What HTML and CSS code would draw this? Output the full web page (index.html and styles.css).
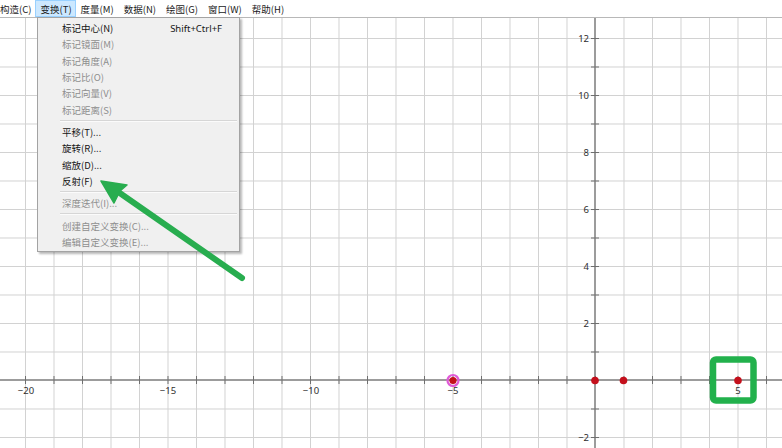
FILE: index.html
```html
<!DOCTYPE html>
<html lang="zh-CN">
<head>
<meta charset="utf-8">
<title>变换</title>
<link rel="stylesheet" href="styles.css">
</head>
<body>
<div class="app">
  <svg class="canvas" width="782" height="448" viewBox="0 0 782 448">
    <defs>
      <pattern id="grid" x="25" y="9.5" width="28.5" height="28.5" patternUnits="userSpaceOnUse">
        <rect x="0" y="0" width="1" height="28.5" fill="#d2d2d2"/>
        <rect x="0" y="0" width="28.5" height="1" fill="#d2d2d2"/>
      </pattern>
      <pattern id="xt" x="25" y="0" width="28.5" height="448" patternUnits="userSpaceOnUse">
        <rect x="0" y="0" width="1" height="448" fill="#6e6e6e"/>
      </pattern>
      <pattern id="yt" x="0" y="9.5" width="782" height="28.5" patternUnits="userSpaceOnUse">
        <rect x="0" y="0" width="782" height="1" fill="#6e6e6e"/>
      </pattern>
    </defs>
    <rect x="0" y="0" width="782" height="448" fill="#ffffff"/>
    <rect x="0" y="0" width="782" height="448" fill="url(#grid)"/>
    <rect x="0" y="379" width="782" height="2" fill="#9c9c9c"/>
    <rect x="594" y="0" width="2" height="448" fill="#9c9c9c"/>
    <rect x="0" y="376" width="782" height="8" fill="url(#xt)"/>
    <rect x="591" y="0" width="8" height="448" fill="url(#yt)"/>
    <g class="lbl">
      <text x="26" y="394" text-anchor="middle">−20</text>
      <text x="168" y="394" text-anchor="middle">−15</text>
      <text x="311" y="394" text-anchor="middle">−10</text>
      <text x="453" y="394" text-anchor="middle">−5</text>
      <text x="738" y="394" text-anchor="middle">5</text>
      <text x="589" y="41.5" text-anchor="end">12</text>
      <text x="589" y="98.5" text-anchor="end">10</text>
      <text x="589" y="155.5" text-anchor="end">8</text>
      <text x="589" y="212.5" text-anchor="end">6</text>
      <text x="589" y="269.5" text-anchor="end">4</text>
      <text x="589" y="326.5" text-anchor="end">2</text>
      <text x="589" y="440.5" text-anchor="end">−2</text>
    </g>
    <circle cx="453" cy="380.5" r="5.5" fill="none" stroke="#e05ad8" stroke-width="2.2"/>
    <circle cx="453" cy="380.5" r="3.6" fill="#c4101c"/>
    <circle cx="595" cy="380.5" r="3.8" fill="#c4101c"/>
    <circle cx="623.5" cy="380.5" r="3.8" fill="#c4101c"/>
    <circle cx="738" cy="380.5" r="3.8" fill="#c4101c"/>
  </svg>

  <nav class="menubar">
    <span class="mi first">构造(C)</span>
    <span class="mi active">变换(T)</span>
    <span class="mi">度量(M)</span>
    <span class="mi">数据(N)</span>
    <span class="mi">绘图(G)</span>
    <span class="mi">窗口(W)</span>
    <span class="mi">帮助(H)</span>
  </nav>

  <div class="dropdown">
    <div class="row"><span>标记中心(N)</span><span class="key">Shift+Ctrl+F</span></div>
    <div class="row off">标记镜面(M)</div>
    <div class="row off">标记角度(A)</div>
    <div class="row off">标记比(O)</div>
    <div class="row off">标记向量(V)</div>
    <div class="row off">标记距离(S)</div>
    <div class="sep"></div>
    <div class="row">平移(T)...</div>
    <div class="row">旋转(R)...</div>
    <div class="row">缩放(D)...</div>
    <div class="row">反射(F)</div>
    <div class="sep"></div>
    <div class="row off">深度迭代(I)...</div>
    <div class="sep"></div>
    <div class="row off">创建自定义变换(C)...</div>
    <div class="row off">编辑自定义变换(E)...</div>
  </div>

  <svg class="annot" width="782" height="448" viewBox="0 0 782 448">
    <line x1="242" y1="278" x2="114" y2="189" stroke="#28ad4f" stroke-width="6" stroke-linecap="round"/>
    <polygon points="101,181 127,185 120,191 114,203" fill="#28ad4f" stroke="#28ad4f" stroke-width="1.5" stroke-linejoin="round"/>
    <rect x="713" y="359.5" width="40.5" height="41" rx="3" fill="none" stroke="#22b14c" stroke-width="6.5"/>
  </svg>
</div>
</body>
</html>
```

FILE: styles.css
```css
* { box-sizing: border-box; }
html, body { margin: 0; padding: 0; }
body {
  width: 782px;
  height: 448px;
  overflow: hidden;
  background: #fff;
  font-family: "Noto Sans CJK SC", "Noto Sans", sans-serif;
}
.app {
  position: relative;
  width: 782px;
  height: 448px;
}
.canvas {
  position: absolute;
  left: 0;
  top: 0;
  display: block;
}
.lbl text {
  font-family: "Noto Sans", "Liberation Sans", sans-serif;
  font-size: 9.5px;
  fill: #2f2f2f;
}
.menubar {
  position: relative;
  display: flex;
  height: 18px;
  background: #fff;
  border-bottom: 1px solid #b8b8b8;
  font-size: 9.5px;
  color: #1a1a1a;
}
.mi {
  display: flex;
  align-items: center;
  padding: 0 5px;
  height: 17px;
  white-space: nowrap;
}
.mi.first { padding: 0 4px 0 0; }
.mi.active {
  background: #cce8ff;
  box-shadow: inset 0 0 0 1px #99d1ff;
  padding: 0 4px 0 5px;
}
.dropdown {
  position: absolute;
  left: 37px;
  top: 17px;
  width: 203px;
  height: 235px;
  padding: 2px 2px 1px 0;
  background: #f0f0f0;
  border: 1px solid #a3a3a3;
  box-shadow: 2px 2px 2px rgba(0, 0, 0, 0.28);
  font-size: 9.5px;
  color: #151515;
  display: flex;
  flex-direction: column;
}
.row {
  height: 16.5px;
  display: flex;
  align-items: center;
  justify-content: space-between;
  padding: 0 15px 0 24px;
  white-space: nowrap;
}
.row.off { color: #8e8e8e; }
.key {
  font-family: "Noto Sans", "Liberation Sans", sans-serif;
  font-size: 9.5px;
}
.sep {
  height: 6px;
  display: flex;
  align-items: center;
  padding-left: 22px;
}
.sep::after {
  content: "";
  display: block;
  width: 100%;
  height: 1px;
  background: #d6d6d6;
  border-bottom: 1px solid #fbfbfb;
}
.annot {
  position: absolute;
  left: 0;
  top: 0;
  display: block;
  pointer-events: none;
}
```
